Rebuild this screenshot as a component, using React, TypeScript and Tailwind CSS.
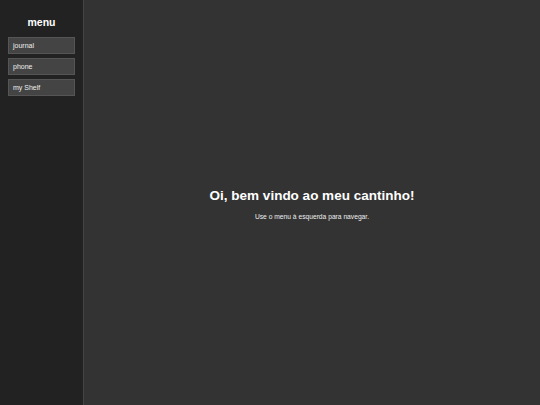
import React from 'react'

const links = ['journal', 'phone', 'my Shelf']

export default function App() {
  return (
    <div
      className="flex h-[405px] w-[540px] bg-[#333333] text-white"
      style={{ fontFamily: '"Liberation Sans", Arial, sans-serif' }}
    >
      <aside className="flex w-[84px] shrink-0 flex-col border-r border-[#444444] bg-[#222222] px-2 pt-[16px]">
        <h2 className="mb-[8px] text-center text-[10.5px] font-bold leading-[13px]">menu</h2>
        <nav className="flex flex-col gap-[4px]">
          {links.map((l) => (
            <button
              key={l}
              className="h-[17px] w-[67px] border border-[#555555] bg-[#444444] px-[4px] text-left text-[7px] leading-none text-[#eeeeee]"
            >
              {l}
            </button>
          ))}
        </nav>
      </aside>
      <main className="flex flex-1 flex-col items-center justify-center pt-[4px]">
        <h1 className="text-[13.5px] font-bold leading-[16px]">Oi, bem vindo ao meu cantinho!</h1>
        <p className="mt-[9px] text-[6.7px] leading-[8px] text-[#eeeeee]">Use o menu à esquerda para navegar.</p>
      </main>
    </div>
  )
}
